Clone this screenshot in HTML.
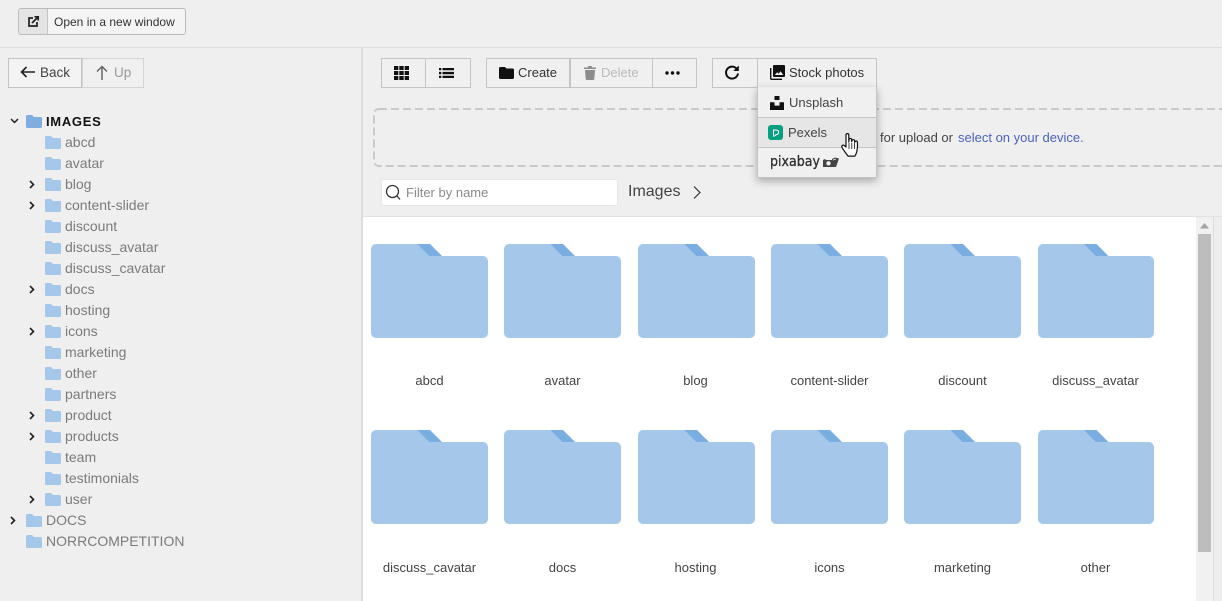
<!DOCTYPE html>
<html><head><meta charset="utf-8"><style>
*{box-sizing:border-box}
html,body{margin:0;padding:0}
body{width:1222px;height:601px;overflow:hidden;background:#efefef;font-family:"Liberation Sans",Arial,sans-serif;position:relative;color:#333}
.a{position:absolute}
.t{position:absolute;white-space:nowrap;line-height:16px}
.b{position:absolute;height:30px;border:1px solid #c4c4c4;background:#f0f0f0}
.tr{position:absolute;left:65px;font-size:14px;line-height:16px;color:#7b7b7b;white-space:nowrap}
.l{position:absolute;width:133px;text-align:center;font-size:13px;line-height:16px;color:#444;white-space:nowrap}
svg{position:absolute;display:block;overflow:visible}
</style></head><body>
<div class="a" style="left:0;top:47px;width:1222px;height:1px;background:#ddd"></div>
<div class="a" style="left:361px;top:48px;width:2px;height:553px;background:#ddd"></div>

<div class="a" style="left:18px;top:8px;width:168px;height:27px;border:1px solid #bbb;border-radius:3px;background:#f4f4f4"></div>
<div class="a" style="left:19px;top:9px;width:29px;height:25px;background:#e4e4e4;border-right:1px solid #c4c4c4;border-radius:2px 0 0 2px"></div>
<svg style="left:28px;top:16px" width="11" height="11" viewBox="0 0 11 11" fill="none" stroke="#222" stroke-width="1.700"><path d="M5 2H1v8h8V6"/><path d="M4 7l6-6M6.500 .8h3.700v3.700"/></svg>
<div class="t" style="left:54px;top:14px;font-size:12px;color:#333">Open in a new window</div>

<div class="b" style="left:8px;top:58px;width:74px;background:#f3f3f3"></div>
<svg style="left:20px;top:66px" width="15" height="12" viewBox="0 0 15 12" fill="none" stroke="#222" stroke-width="1.600"><path d="M15 6H1.500M6.500 1L1.500 6l5 5"/></svg>
<div class="t" style="left:40px;top:65px;font-size:13.500px;color:#444">Back</div>
<div class="b" style="left:82px;top:58px;width:62px;border-color:#d4d4d4"></div>
<svg style="left:96px;top:65px" width="12" height="15" viewBox="0 0 12 15" fill="none" stroke="#666" stroke-width="1.500"><path d="M6 15V1.500M1 6.500l5-5 5 5"/></svg>
<div class="t" style="left:114px;top:65px;font-size:13.500px;color:#999">Up</div>

<svg style="left:10px;top:118px" width="9" height="6" viewBox="0 0 9 6" fill="none" stroke="#222" stroke-width="1.500"><path d="M1 1l3.500 3.500L8 1"/></svg>
<svg style="left:26px;top:115px" width="16" height="13" viewBox="0 0 16 13"><path fill="#7eaee0" d="M1.500 0H6l2 2h6.500A1.500 1.500 0 0 1 16 3.500v8a1.500 1.500 0 0 1-1.500 1.500h-13A1.500 1.500 0 0 1 0 11.500v-10A1.500 1.500 0 0 1 1.500 0z"/></svg>
<div class="t" style="left:46px;top:114px;font-size:13px;font-weight:bold;color:#111;letter-spacing:.7px">IMAGES</div>

<svg width="0" height="0" style="position:absolute"><defs><path id="f" fill="#a5c7ea" d="M1.500 0H6l2 2h6.500A1.500 1.500 0 0 1 16 3.500v8a1.500 1.500 0 0 1-1.500 1.500h-13A1.500 1.500 0 0 1 0 11.500v-10A1.500 1.500 0 0 1 1.500 0z"/><path id="c" fill="none" stroke="#222" stroke-width="1.600" d="M1 1l3.500 3.500L1 8"/>
<g id="F"><path fill="#7aaee2" d="M46 0h13l12 12H58z"/><path fill="#a5c7ea" d="M5 0h41.500L58 12h54a5 5 0 0 1 5 5v72a5 5 0 0 1-5 5H5a5 5 0 0 1-5-5V5a5 5 0 0 1 5-5z"/></g></defs></svg>

<svg style="left:45px;top:136px" width="16" height="13"><use href="#f"/></svg><div class="tr" style="top:134px">abcd</div>
<svg style="left:45px;top:157px" width="16" height="13"><use href="#f"/></svg><div class="tr" style="top:155px">avatar</div>
<svg style="left:29px;top:180px" width="6" height="9"><use href="#c"/></svg><svg style="left:45px;top:178px" width="16" height="13"><use href="#f"/></svg><div class="tr" style="top:176px">blog</div>
<svg style="left:29px;top:201px" width="6" height="9"><use href="#c"/></svg><svg style="left:45px;top:199px" width="16" height="13"><use href="#f"/></svg><div class="tr" style="top:197px">content-slider</div>
<svg style="left:45px;top:220px" width="16" height="13"><use href="#f"/></svg><div class="tr" style="top:218px">discount</div>
<svg style="left:45px;top:241px" width="16" height="13"><use href="#f"/></svg><div class="tr" style="top:239px">discuss_avatar</div>
<svg style="left:45px;top:262px" width="16" height="13"><use href="#f"/></svg><div class="tr" style="top:260px">discuss_cavatar</div>
<svg style="left:29px;top:285px" width="6" height="9"><use href="#c"/></svg><svg style="left:45px;top:283px" width="16" height="13"><use href="#f"/></svg><div class="tr" style="top:281px">docs</div>
<svg style="left:45px;top:304px" width="16" height="13"><use href="#f"/></svg><div class="tr" style="top:302px">hosting</div>
<svg style="left:29px;top:327px" width="6" height="9"><use href="#c"/></svg><svg style="left:45px;top:325px" width="16" height="13"><use href="#f"/></svg><div class="tr" style="top:323px">icons</div>
<svg style="left:45px;top:346px" width="16" height="13"><use href="#f"/></svg><div class="tr" style="top:344px">marketing</div>
<svg style="left:45px;top:367px" width="16" height="13"><use href="#f"/></svg><div class="tr" style="top:365px">other</div>
<svg style="left:45px;top:388px" width="16" height="13"><use href="#f"/></svg><div class="tr" style="top:386px">partners</div>
<svg style="left:29px;top:411px" width="6" height="9"><use href="#c"/></svg><svg style="left:45px;top:409px" width="16" height="13"><use href="#f"/></svg><div class="tr" style="top:407px">product</div>
<svg style="left:29px;top:432px" width="6" height="9"><use href="#c"/></svg><svg style="left:45px;top:430px" width="16" height="13"><use href="#f"/></svg><div class="tr" style="top:428px">products</div>
<svg style="left:45px;top:451px" width="16" height="13"><use href="#f"/></svg><div class="tr" style="top:449px">team</div>
<svg style="left:45px;top:472px" width="16" height="13"><use href="#f"/></svg><div class="tr" style="top:470px">testimonials</div>
<svg style="left:29px;top:495px" width="6" height="9"><use href="#c"/></svg><svg style="left:45px;top:493px" width="16" height="13"><use href="#f"/></svg><div class="tr" style="top:491px">user</div>
<svg style="left:10px;top:516px" width="6" height="9"><use href="#c"/></svg><svg style="left:26px;top:514px" width="16" height="13"><use href="#f"/></svg><div class="tr" style="left:46px;top:512px">DOCS</div>
<svg style="left:26px;top:535px" width="16" height="13"><use href="#f"/></svg><div class="tr" style="left:46px;top:533px">NORRCOMPETITION</div>

<!-- toolbar -->
<div class="b" style="left:381px;top:58px;width:45px"></div>
<div class="b" style="left:425px;top:58px;width:46px"></div>
<svg style="left:394px;top:66px" width="15" height="14" viewBox="0 0 15 14" fill="#111"><path d="M0 0h4.300v4H0zM5.300 0h4.400v4H5.300zM10.700 0H15v4h-4.300zM0 5h4.300v4H0zM5.300 5h4.400v4H5.300zM10.700 5H15v4h-4.300zM0 10h4.300v4H0zM5.300 10h4.400v4H5.300zM10.700 10H15v4h-4.300z"/></svg>
<svg style="left:439px;top:68px" width="15" height="10" viewBox="0 0 15 10" fill="#111"><path d="M0 0h2.300v2.300H0zM3.500 0H15v2.300H3.500zM0 3.900h2.300v2.300H0zM3.500 3.900H15v2.300H3.500zM0 7.700h2.300V10H0zM3.500 7.700H15V10H3.500z"/></svg>

<div class="b" style="left:486px;top:58px;width:84px"></div>
<div class="b" style="left:570px;top:58px;width:83px"></div>
<div class="b" style="left:652px;top:58px;width:45px"></div>
<svg style="left:499px;top:67px" width="15" height="12" viewBox="0 0 15 12"><path fill="#111" d="M1.500 0H6l1.500 1.500h6A1.500 1.500 0 0 1 15 3v7.500a1.500 1.500 0 0 1-1.500 1.500h-12A1.500 1.500 0 0 1 0 10.500v-9A1.500 1.500 0 0 1 1.500 0z"/></svg>
<div class="t" style="left:518px;top:65px;font-size:13px;color:#333">Create</div>
<svg style="left:584px;top:66px" width="12" height="14" viewBox="0 0 12 14" fill="#8c8c8c"><path d="M0 1.500h3.500L4.500 0h3l1 1.500H12V3H0zM1 4h10l-.7 9a1 1 0 0 1-1 1H2.700a1 1 0 0 1-1-1z"/></svg>
<div class="t" style="left:601px;top:65px;font-size:13px;color:#bbb">Delete</div>
<svg style="left:665px;top:71px" width="15" height="4" viewBox="0 0 15 4" fill="#111"><circle cx="2" cy="2" r="1.700"/><circle cx="7.500" cy="2" r="1.700"/><circle cx="13" cy="2" r="1.700"/></svg>

<div class="b" style="left:712px;top:58px;width:46px"></div>
<div class="b" style="left:757px;top:58px;width:120px"></div>
<svg style="left:725px;top:65px" width="14" height="15" viewBox="0 0 14 15" fill="none" stroke="#111" stroke-width="2"><path d="M12 4.200A6 6 0 1 0 13 8.500"/><path fill="#111" stroke="none" d="M13.800 .5v5.500H8.300z"/></svg>
<svg style="left:770px;top:65px" width="15" height="15" viewBox="0 0 15 15"><path fill="none" stroke="#111" stroke-width="1.400" d="M.7 3v10.500a.8.8 0 0 0 .8.800H12"/><path fill="#111" fill-rule="evenodd" d="M4 0h10a1 1 0 0 1 1 1v10a1 1 0 0 1-1 1H4a1 1 0 0 1-1-1V1a1 1 0 0 1 1-1zM4.800 10h8.500l-2.700-3.700-2 2.500-1.400-1.600z"/></svg>
<div class="t" style="left:789px;top:65px;font-size:13px;color:#333">Stock photos</div>

<!-- dropzone -->
<svg style="left:373px;top:108px" width="880" height="59"><rect x="1" y="1" width="880" height="57" rx="5" fill="none" stroke="#c9c9c9" stroke-width="2" stroke-dasharray="8 4"/></svg>
<div class="t" style="left:880px;top:130px;font-size:13px;color:#444">for upload or</div>
<div class="t" style="left:958px;top:130px;font-size:13px;color:#4a63c0">select on your device.</div>

<!-- dropdown -->
<div class="a" style="left:757px;top:87px;width:120px;height:91px;background:#f0f0f0;border:1px solid #c4c4c4;border-top:0;box-shadow:0 3px 8px rgba(0,0,0,.3)"></div>
<div class="a" style="left:758px;top:117px;width:118px;height:31px;background:#e6e6e6;border-top:1px solid #c4c4c4;border-bottom:1px solid #c4c4c4"></div>
<svg style="left:770px;top:96px" width="14" height="14" viewBox="0 0 14 14" fill="#111"><path d="M4.500 0h5v4h-5zM0 6.200h4.500v3.400h5V6.200H14V14H0z"/></svg>
<div class="t" style="left:789px;top:95px;font-size:13px;color:#444">Unsplash</div>
<svg style="left:768px;top:125px" width="15" height="15" viewBox="0 0 15 15"><rect width="15" height="15" rx="3" fill="#05a081"/><path fill="none" stroke="#fff" stroke-width="1.100" d="M5.500 5h2.800a2.300 2.300 0 0 1 0 4.600L6.500 11H5.500z"/></svg>
<div class="t" style="left:788px;top:125px;font-size:13px;color:#444">Pexels</div>
<svg style="left:770px;top:154px" width="70" height="17" viewBox="0 0 70 17"><text x="0" y="12" font-family="DejaVu Sans" font-size="14" fill="#2e2e2e" stroke="#2e2e2e" stroke-width=".3" textLength="50" lengthAdjust="spacingAndGlyphs">pixabay</text><path fill="#444" d="M53 6l2-1 1 1h6V5l3-1.500 4 1-3 8.500H53z"/><circle cx="58.500" cy="9.300" r="2.200" fill="#efefef"/><path fill="none" stroke="#efefef" stroke-width=".7" d="M63 6l3-1"/></svg>
<svg style="left:841px;top:133px;z-index:5" width="18" height="25" viewBox="0 0 18 25"><path fill="#fff" stroke="#111" stroke-width="1.200" stroke-linejoin="round" d="M5 2a1.400 1.400 0 0 1 2.800 0v7l.2-2.200a1.300 1.300 0 0 1 2.600 0l.1 2 .3-1.400a1.300 1.300 0 0 1 2.500.2l.2 1.700.5-.8a1.200 1.200 0 0 1 2.200.6c.3 3 .2 6-.5 9-.4 2-1 3.500-2 5H7c-1-1.500-3-4-4.700-6.500-.7-1.200-1.500-2.300-1.500-3.200 0-1.200 1.500-1.700 2.500-.8L5 14z"/><path fill="none" stroke="#111" stroke-width=".8" d="M8 10v6M10.800 10v6M13.500 10v6"/></svg>

<!-- filter -->
<div class="a" style="left:381px;top:179px;width:237px;height:27px;background:#fff;border:1px solid #e8e8e8;border-radius:3px"></div>
<svg style="left:385px;top:184px" width="16" height="17" viewBox="0 0 16 17" fill="none" stroke="#333" stroke-width="1.300"><circle cx="7.500" cy="7.500" r="6"/><path d="M12 12l3 3.500"/></svg>
<div class="t" style="left:406px;top:185px;font-size:13px;color:#8a8a8a">Filter by name</div>
<div class="t" style="left:628px;top:184px;font-size:16px;color:#444">Images</div>
<svg style="left:693px;top:186px" width="8" height="13" viewBox="0 0 8 13" fill="none" stroke="#333" stroke-width="1.200"><path d="M1 .5l6 6-6 6"/></svg>

<!-- content -->
<div class="a" style="left:363px;top:216px;width:859px;height:385px;background:#fff;border-top:1px solid #e2e2e2"></div>
<div class="a" style="left:1196px;top:217px;width:17px;height:384px;background:#f1f1f1"></div>
<div class="a" style="left:1213px;top:217px;width:9px;height:384px;background:#eee;border-left:1px solid #ddd"></div>
<div class="a" style="left:1198px;top:234px;width:13px;height:318px;background:#bdbdbd"></div>
<svg style="left:1200px;top:223px" width="9" height="6"><path fill="#a3a3a3" d="M4.500 0L9 5.500H0z"/></svg>

<svg style="left:371px;top:244px" width="117" height="94"><use href="#F"/></svg>
<svg style="left:504px;top:244px" width="117" height="94"><use href="#F"/></svg>
<svg style="left:638px;top:244px" width="117" height="94"><use href="#F"/></svg>
<svg style="left:771px;top:244px" width="117" height="94"><use href="#F"/></svg>
<svg style="left:904px;top:244px" width="117" height="94"><use href="#F"/></svg>
<svg style="left:1038px;top:244px" width="116" height="94" viewBox="0 0 117 94" preserveAspectRatio="none"><use href="#F"/></svg>
<svg style="left:371px;top:430px" width="117" height="94"><use href="#F"/></svg>
<svg style="left:504px;top:430px" width="117" height="94"><use href="#F"/></svg>
<svg style="left:638px;top:430px" width="117" height="94"><use href="#F"/></svg>
<svg style="left:771px;top:430px" width="117" height="94"><use href="#F"/></svg>
<svg style="left:904px;top:430px" width="117" height="94"><use href="#F"/></svg>
<svg style="left:1038px;top:430px" width="116" height="94" viewBox="0 0 117 94" preserveAspectRatio="none"><use href="#F"/></svg>

<div class="l" style="left:363px;top:373px">abcd</div>
<div class="l" style="left:496px;top:373px">avatar</div>
<div class="l" style="left:629px;top:373px">blog</div>
<div class="l" style="left:763px;top:373px">content-slider</div>
<div class="l" style="left:896px;top:373px">discount</div>
<div class="l" style="left:1029px;top:373px">discuss_avatar</div>
<div class="l" style="left:363px;top:560px">discuss_cavatar</div>
<div class="l" style="left:496px;top:560px">docs</div>
<div class="l" style="left:629px;top:560px">hosting</div>
<div class="l" style="left:763px;top:560px">icons</div>
<div class="l" style="left:896px;top:560px">marketing</div>
<div class="l" style="left:1029px;top:560px">other</div>
</body></html>
